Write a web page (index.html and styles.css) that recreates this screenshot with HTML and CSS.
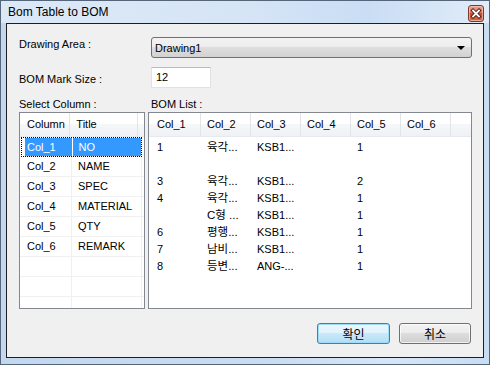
FILE: index.html
```html
<!DOCTYPE html>
<html>

<head>
  <title>Bom Table to BOM</title>
  <link rel="stylesheet" href="styles.css">
</head>

<body>
  <div class="window">
    <div class="titlebar">
      <span class="title">Bom Table to BOM</span>
      <div class="close-btn">
        <svg width="14" height="15" viewBox="0 0 14 15">
          <path d="M4 4.5 L10 10.5 M10 4.5 L4 10.5" stroke="#4a1e14" stroke-width="3.6" stroke-linecap="square" />
          <path d="M4 4.5 L10 10.5 M10 4.5 L4 10.5" stroke="#ffffff" stroke-width="1.8" stroke-linecap="square" />
        </svg>
      </div>
    </div>

    <div class="client">
      <div class="field">
        <label class="lbl-area">Drawing Area :</label>
        <div class="combo">
          <span>Drawing1</span>
          <span class="arrow"></span>
        </div>
      </div>

      <div class="field">
        <label class="lbl-size">BOM Mark Size :</label>
        <div class="textbox">12</div>
      </div>

      <div class="lists">
        <div class="list-col">
          <div class="list-label">Select Column :</div>
          <div class="listview left-list">
            <div class="lv-head">
              <div class="hc lc1">Column</div>
              <div class="hc lc2">Title</div>
              <div class="hc fill"></div>
            </div>
            <div class="lrow selected">
              <div class="lc lc1"><span>Col_1</span></div>
              <div class="lc lc2">NO</div>
            </div>
            <div class="lrow">
              <div class="lc lc1"><span>Col_2</span></div>
              <div class="lc lc2">NAME</div>
            </div>
            <div class="lrow">
              <div class="lc lc1"><span>Col_3</span></div>
              <div class="lc lc2">SPEC</div>
            </div>
            <div class="lrow">
              <div class="lc lc1"><span>Col_4</span></div>
              <div class="lc lc2">MATERIAL</div>
            </div>
            <div class="lrow">
              <div class="lc lc1"><span>Col_5</span></div>
              <div class="lc lc2">QTY</div>
            </div>
            <div class="lrow">
              <div class="lc lc1"><span>Col_6</span></div>
              <div class="lc lc2">REMARK</div>
            </div>
            <div class="lrow">
              <div class="lc lc1"></div>
              <div class="lc lc2"></div>
            </div>
            <div class="lrow">
              <div class="lc lc1"></div>
              <div class="lc lc2"></div>
            </div>
            <div class="lrow">
              <div class="lc lc1"></div>
              <div class="lc lc2"></div>
            </div>
          </div>
        </div>

        <div class="list-col">
          <div class="list-label bom-label">BOM List :</div>
          <div class="listview right-list">
            <div class="lv-head">
              <div class="hc rc1">Col_1</div>
              <div class="hc rc">Col_2</div>
              <div class="hc rc">Col_3</div>
              <div class="hc rc">Col_4</div>
              <div class="hc rc">Col_5</div>
              <div class="hc rc">Col_6</div>
              <div class="hc fill"></div>
            </div>
            <div class="bom-body">
              <div class="rrow"><div class="rc1">1</div><div class="rc">육각...</div><div class="rc">KSB1...</div><div class="rc"></div><div class="rc">1</div><div class="rc"></div></div>
              <div class="rrow"><div class="rc1"></div><div class="rc"></div><div class="rc"></div><div class="rc"></div><div class="rc"></div><div class="rc"></div></div>
              <div class="rrow"><div class="rc1">3</div><div class="rc">육각...</div><div class="rc">KSB1...</div><div class="rc"></div><div class="rc">2</div><div class="rc"></div></div>
              <div class="rrow"><div class="rc1">4</div><div class="rc">육각...</div><div class="rc">KSB1...</div><div class="rc"></div><div class="rc">1</div><div class="rc"></div></div>
              <div class="rrow"><div class="rc1"></div><div class="rc">C형 ...</div><div class="rc">KSB1...</div><div class="rc"></div><div class="rc">1</div><div class="rc"></div></div>
              <div class="rrow"><div class="rc1">6</div><div class="rc">평행...</div><div class="rc">KSB1...</div><div class="rc"></div><div class="rc">1</div><div class="rc"></div></div>
              <div class="rrow"><div class="rc1">7</div><div class="rc">남비...</div><div class="rc">KSB1...</div><div class="rc"></div><div class="rc">1</div><div class="rc"></div></div>
              <div class="rrow"><div class="rc1">8</div><div class="rc">등변...</div><div class="rc">ANG-...</div><div class="rc"></div><div class="rc">1</div><div class="rc"></div></div>
            </div>
          </div>
        </div>
      </div>

      <div class="buttons">
        <button class="btn btn-default">확인</button>
        <button class="btn btn-cancel">취소</button>
      </div>
    </div>
  </div>
</body>

</html>
```

FILE: styles.css
```css
* {
  box-sizing: border-box;
}

body {
  margin: 0;
  font-family: "Liberation Sans", "Noto Sans CJK KR", sans-serif;
  font-size: 11px;
  color: #000;
}

/* window frame */
.window {
  width: 490px;
  height: 365px;
  border: 1px solid #56667a;
  background: linear-gradient(to right, #c3d7ee, #cadcf1 55%, #d6e6f7 80%, #c8dcf2);
  display: flex;
  flex-direction: column;
}

.titlebar {
  height: 22px;
  display: flex;
  justify-content: space-between;
  align-items: flex-start;
  padding: 0 5px 0 7px;
  background: linear-gradient(to right, #dbe8f6, #d6e5f6 50%, #c9ddf4 75%, #e1ecf9);
}

.title {
  font-size: 12px;
  line-height: 23px;
  color: #000;
}

.close-btn {
  margin-top: 4px;
  width: 16px;
  height: 17px;
  border: 1px solid #7b3a2c;
  border-radius: 3px;
  background: linear-gradient(#eaa592, #d9785f 45%, #c44b2c 50%, #d86a48);
  box-shadow: inset 0 0 0 1px rgba(255, 210, 195, 0.6);
  display: flex;
  align-items: center;
  justify-content: center;
}

.client {
  margin: 0 5px;
  height: 335px;
  border: 1px solid #1e1e1e;
  background-color: #f0f0f0;
  padding: 13px 11px 0 12px;
}

/* form rows */
.field {
  display: grid;
  grid-template-columns: 132px 321px;
  height: 21px;
  margin-bottom: 9px;
}

.field label {
  line-height: 13px;
}

.lbl-area {
  padding-top: 1px;
}

.lbl-size {
  padding-top: 6px;
}

.combo {
  height: 21px;
  border: 1px solid #707070;
  border-radius: 3px;
  background: linear-gradient(#f3f3f3, #ececec 50%, #dedede 50%, #d2d2d2);
  display: flex;
  align-items: center;
  justify-content: space-between;
  padding: 0 6px 0 3px;
}

.arrow {
  width: 0;
  height: 0;
  border-left: 4px solid transparent;
  border-right: 4px solid transparent;
  border-top: 4px solid #000;
}

.textbox {
  width: 60px;
  height: 21px;
  background-color: #fff;
  border: 1px solid #dfe3e8;
  border-top-color: #b8bcc2;
  padding: 0 4px;
  line-height: 19px;
}

/* lists */
.lists {
  display: flex;
  gap: 3px;
}

.list-label {
  line-height: 14px;
  margin-bottom: 1px;
}

.bom-label {
  padding-left: 3px;
}

.listview {
  height: 197px;
  border: 1px solid #828790;
  background-color: #fff;
  overflow: hidden;
}

.left-list {
  width: 126px;
}

.right-list {
  width: 324px;
}

.lv-head {
  display: flex;
  height: 24px;
  background: linear-gradient(#ffffff, #ffffff 45%, #f6f7f9 50%, #eff1f4);
  border-bottom: 1px solid #e6e9ee;
}

.hc {
  line-height: 23px;
  padding-left: 6px;
  border-right: 1px solid #e1e5ea;
}

.hc.fill {
  flex: 1;
  border-right: none;
}

.lc1 {
  width: 52px;
}

.lc2 {
  width: 70px;
}

.hc.lc1 {
  padding-left: 7px;
}

.lrow {
  display: flex;
  height: 20px;
  border-bottom: 1px solid #f0f0f0;
}

.lc {
  line-height: 19px;
  border-right: 1px solid #f0f0f0;
}

.lc.lc1 {
  padding-left: 5px;
}

.lc.lc1 span {
  display: block;
  padding-left: 2px;
}

.lc.lc2 {
  padding-left: 6px;
}

.lrow.selected {
  outline: 1px dotted #000;
  outline-offset: -1px;
  margin-left: 1px;
  width: 121px;
}

.lrow.selected .lc {
  color: #fff;
  border-right-color: #fff;
}

.lrow.selected .lc.lc1 {
  padding-left: 4px;
}

.lrow.selected .lc.lc1 span {
  background-color: #3399ff;
  margin-top: 1px;
  line-height: 18px;
}

.lrow.selected .lc.lc2 {
  background: linear-gradient(#fff 0 1px, #3399ff 1px);
  padding-top: 1px;
  line-height: 18px;
}

.rc1 {
  width: 52px;
  padding-left: 8px;
}

.rc {
  width: 50px;
  padding-left: 6px;
  white-space: nowrap;
}

.bom-body {
  padding-top: 2px;
}

.rrow {
  display: flex;
  height: 17px;
  line-height: 17px;
}

.rrow .rc:nth-child(2) {
  font-size: 11.5px;
}

/* buttons */
.buttons {
  display: flex;
  justify-content: flex-end;
  gap: 9px;
  margin-top: 14px;
  padding-right: 1px;
}

.btn {
  height: 21px;
  border: 1px solid #707070;
  border-radius: 3px;
  font-family: "Noto Sans CJK KR", sans-serif;
  font-size: 12px;
  color: #000;
  padding: 0;
  background: linear-gradient(#f2f2f2, #ebebeb 50%, #dddddd 50%, #cfcfcf);
  box-shadow: inset 0 0 0 1px rgba(255, 255, 255, 0.7);
}

.btn-default {
  width: 73px;
  border-color: #3c7fb1;
  background: linear-gradient(#eaf6fd, #dff2fc 50%, #c9e9fb 50%, #b3dcf3);
  box-shadow: inset 0 0 0 1px #9fdcfa;
}

.btn-cancel {
  width: 72px;
}
```
